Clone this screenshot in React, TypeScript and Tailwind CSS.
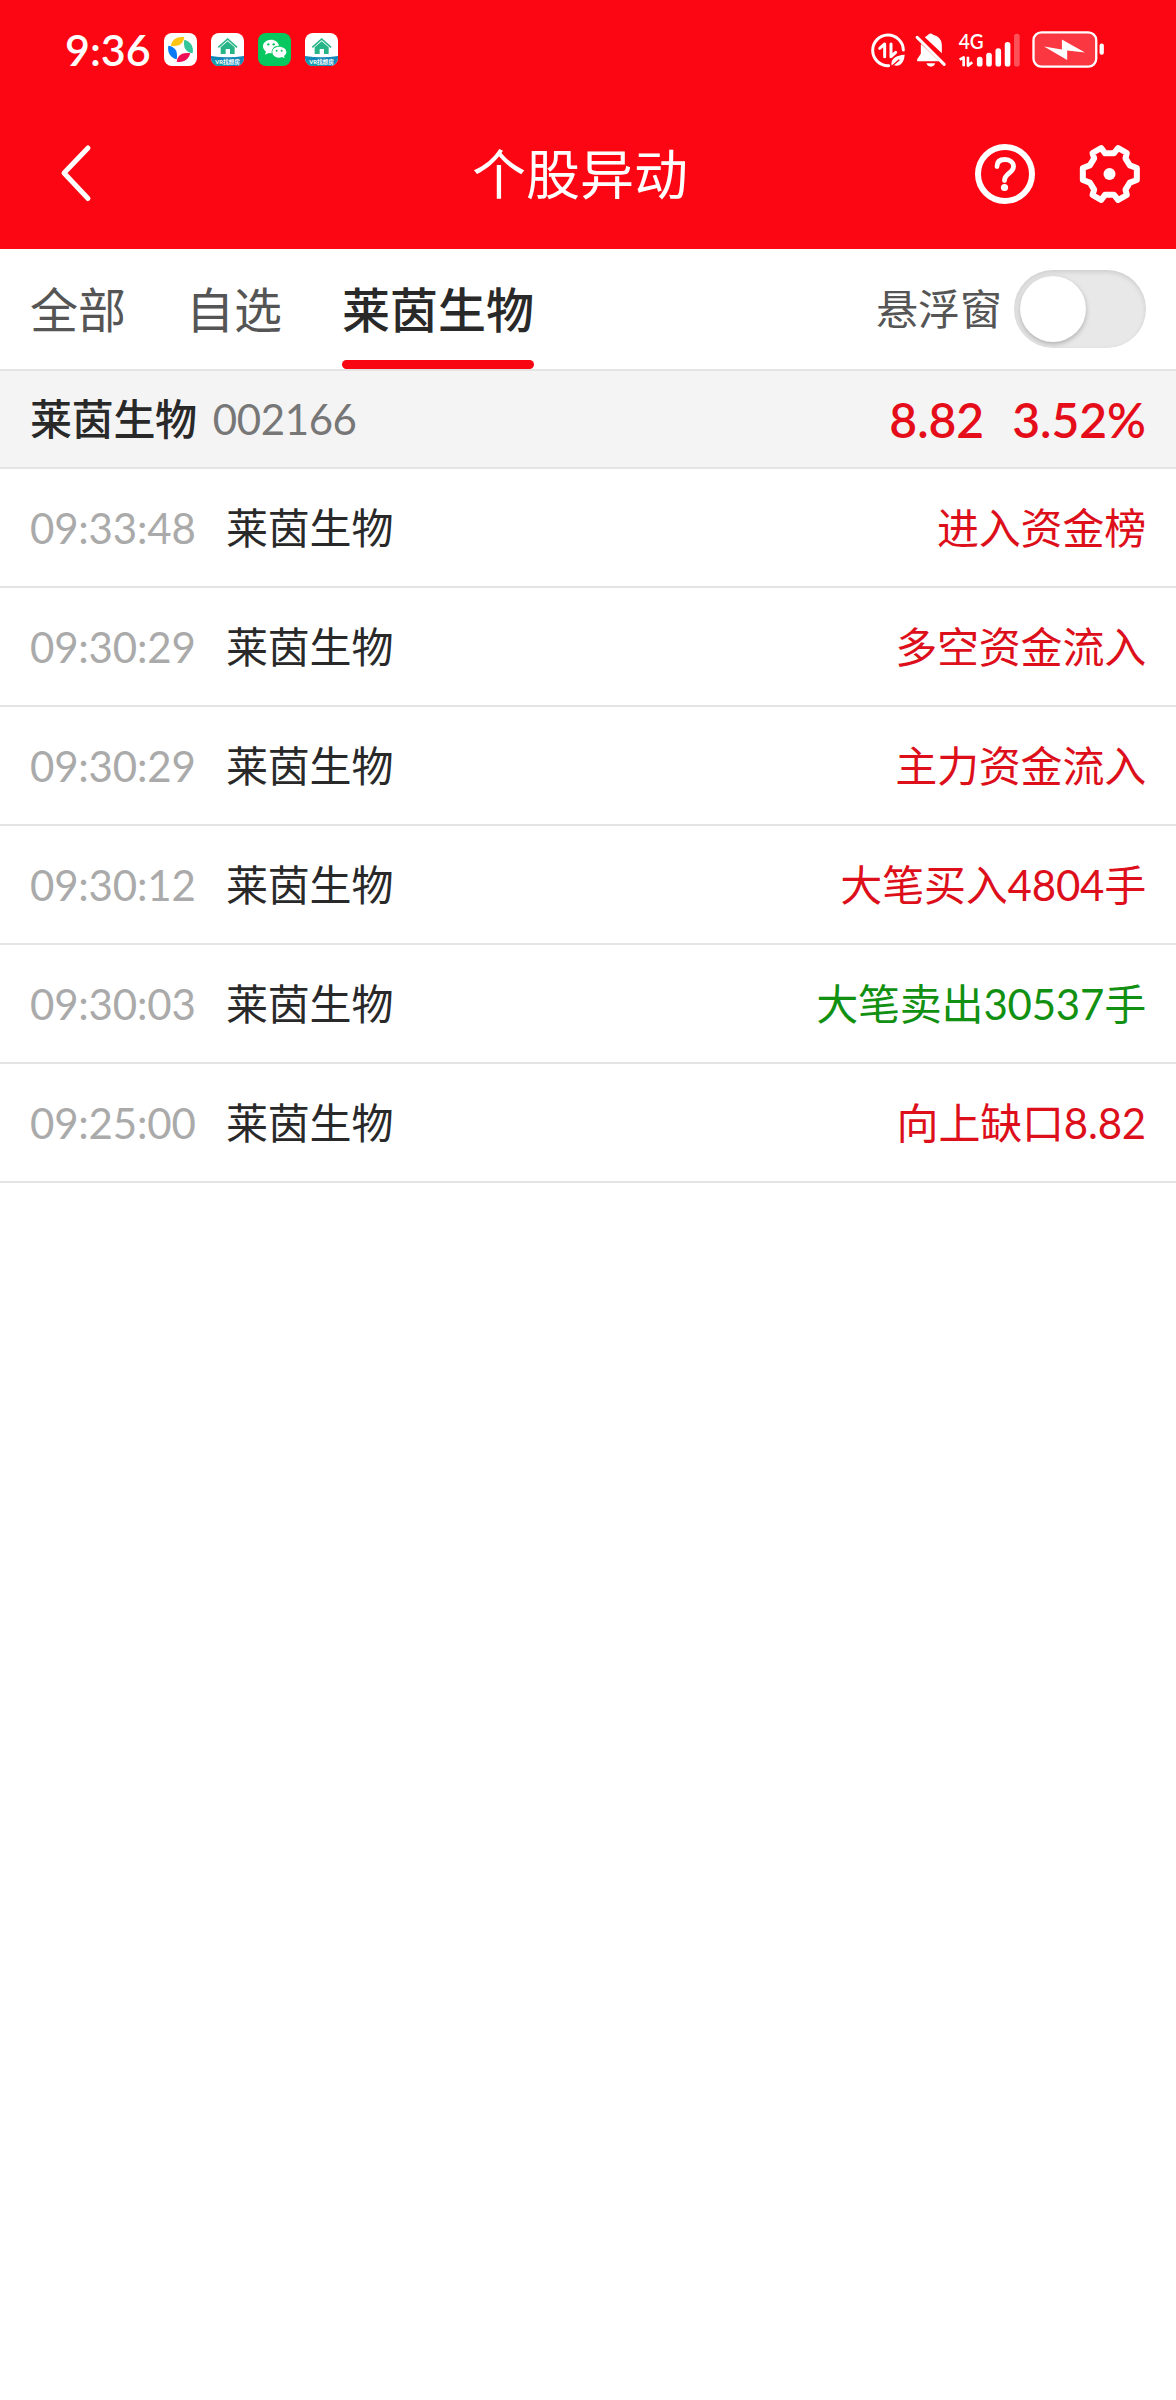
import type { ReactNode } from "react";

interface Alert {
  time: string;
  name: string;
  text: string;
  down?: boolean;
}

const alerts: Alert[] = [
  { time: "09:33:48", name: "莱茵生物", text: "进入资金榜" },
  { time: "09:30:29", name: "莱茵生物", text: "多空资金流入" },
  { time: "09:30:29", name: "莱茵生物", text: "主力资金流入" },
  { time: "09:30:12", name: "莱茵生物", text: "大笔买入4804手" },
  { time: "09:30:03", name: "莱茵生物", text: "大笔卖出30537手", down: true },
  { time: "09:25:00", name: "莱茵生物", text: "向上缺口8.82" },
];

function AppIcon({ bg, children }: { bg: string; children: ReactNode }) {
  return (
    <svg viewBox="0 0 99 99" className="h-[33px] w-[33px] rounded-[8px]">
      <rect width="99" height="99" fill={bg} />
      {children}
    </svg>
  );
}

function PinwheelIcon() {
  return (
    <AppIcon bg="#fff">
      <path d="M20 38C25 20 40 9 61 13C60 24 54 32 45 37C37 39 28 40 20 38Z" fill="#fdc414" />
      <path d="M61 20C79 25 90 40 86 61C75 60 67 54 62 45C60 37 59 28 61 20Z" fill="#35c79a" />
      <path d="M79 61C74 79 59 90 38 86C39 75 45 67 54 62C62 60 71 59 79 61Z" fill="#ef0f55" />
      <path d="M38 79C20 74 9 59 13 38C24 39 32 45 37 54C39 62 40 71 38 79Z" fill="#0a79f6" />
    </AppIcon>
  );
}

function HouseIcon() {
  return (
    <AppIcon bg="#fff">
      <path d="M22 43L50 18L78 43" fill="none" stroke="#27b587" strokeWidth="5" />
      <path d="M29 43L50 25L71 43V63H57V48H44V63H29Z" fill="#27b587" />
      <path d="M0 69Q50 77 99 69V99H0Z" fill="#1488b8" />
      <path d="M0 84Q30 75 60 99H0Z" fill="#1b9dab" />
      <text
        x="50"
        y="93"
        textAnchor="middle"
        fontSize="18"
        fontWeight="700"
        fill="#fff"
        textLength="74"
        lengthAdjust="spacingAndGlyphs"
      >
        VR找想房
      </text>
    </AppIcon>
  );
}

function WechatIcon() {
  return (
    <AppIcon bg="#07c75f">
      <path d="M39 20C25 20 15 29 15 40C15 47 19 52 24 56L21 65L32 60C35 61 38 61 41 61C40 46 50 37 63 38C61 27 51 20 39 20Z" fill="#fff" />
      <path d="M63 41C51 41 43 48 43 57C43 67 52 74 63 74C66 74 69 73 72 72L80 76L78 69C82 66 85 62 85 57C85 48 76 41 63 41Z" fill="#fff" />
      <circle cx="31" cy="34" r="3.5" fill="#07c75f" />
      <circle cx="47" cy="34" r="3.5" fill="#07c75f" />
      <circle cx="56" cy="53" r="3" fill="#07c75f" />
      <circle cx="71" cy="53" r="3" fill="#07c75f" />
    </AppIcon>
  );
}

function StatusBar() {
  return (
    <div className="flex h-[99px] items-center justify-between pr-[71px] pl-[65px]">
      <div className="flex items-center gap-[14px]">
        <span className="w-[85px] text-[43px] leading-none font-semibold">9:36</span>
        <PinwheelIcon />
        <HouseIcon />
        <WechatIcon />
        <HouseIcon />
      </div>
      <div className="flex items-center">
        {/* Data saver */}
        <svg viewBox="0 0 108 108" className="mr-[9px] h-[36px] w-[36px]" fill="none" stroke="#fff">
          <path d="M100 54A46 46 0 1 0 56 101" strokeWidth="9" strokeLinecap="round" />
          <path d="M29 49L44 36V74" strokeWidth="9" strokeLinejoin="round" strokeLinecap="round" />
          <path d="M63 36V74L77 61" strokeWidth="9" strokeLinejoin="round" strokeLinecap="round" />
          <path d="M65 101C60 80 80 69 104 68C103 90 90 106 72 100Z" fill="#fff" stroke="none" />
          <path d="M63 105L88 83" stroke="#fb0612" strokeWidth="4" />
        </svg>
        {/* Muted bell */}
        <svg viewBox="0 0 92 108" className="mr-[12px] h-[36px] w-[31px]">
          <path d="M17 38V65L6 82V88H72L18 36Z" fill="#fff" />
          <path d="M29 16Q35 11 39 8Q46 1 54 8Q80 15 80 38V64Z" fill="#fff" />
          <path d="M34 94H60Q57 104 47 104Q37 104 34 94Z" fill="#fff" />
          <path d="M6 16L87 97" stroke="#fff" strokeWidth="9" strokeLinecap="round" />
        </svg>
        {/* Mobile signal */}
        <svg viewBox="0 0 190 108" className="mr-[11px] h-[36px] w-[63px] overflow-visible">
          <text x="2" y="52" fontSize="64" fontWeight="600" fill="#fff" textLength="75" lengthAdjust="spacingAndGlyphs">
            4G
          </text>
          <path d="M5 83L17 76V103M30 74V101L43 91" fill="none" stroke="#fff" strokeWidth="8" strokeLinejoin="round" />
          <rect x="57" y="74" width="17" height="30" rx="8" fill="#fff" />
          <rect x="85" y="62" width="17" height="42" rx="8" fill="#fff" />
          <rect x="113" y="49" width="17" height="55" rx="8" fill="#fff" />
          <rect x="141" y="30" width="17" height="74" rx="8" fill="#fff" />
          <rect x="169" y="5" width="17" height="99" rx="8" fill="#fff" fillOpacity="0.3" />
        </svg>
        {/* Charging battery */}
        <svg viewBox="0 0 220 112" className="h-[37px] w-[73px]">
          <rect x="4" y="4" width="190" height="104" rx="24" fill="#fff" fillOpacity="0.2" stroke="#fff" strokeWidth="7" />
          <path d="M36 47L90 56V26L160 65L106 59V88Z" fill="#fff" />
          <rect x="204" y="38" width="13" height="34" rx="6" fill="#fff" />
        </svg>
      </div>
    </div>
  );
}

function Header() {
  return (
    <div className="grid h-[150px] grid-cols-[472px_1fr_201px] items-center">
      <svg viewBox="0 0 100 90" className="ml-[39px] h-[90px] w-[100px]" fill="none" stroke="#fff">
        <path d="M49 19L25 44L49 69.500" strokeWidth="5" strokeLinecap="round" strokeLinejoin="round" />
      </svg>
      <h1 className="pt-[2px] text-[54px] leading-[54px]">个股异动</h1>
      <div className="flex items-center">
        {/* Help */}
        <svg viewBox="0 0 60 60" className="mr-[43px] h-[60px] w-[60px]" fill="none" stroke="#fff">
          <circle cx="30" cy="30" r="27" strokeWidth="6" />
          <path d="M22 22.500C22 17.500 25 15.500 30 15.500C35 15.500 38.500 18.500 38.500 22.500C38.500 29 29.500 29.500 29.500 36.500" strokeWidth="4.800" strokeLinecap="round" />
          <circle cx="29.500" cy="43.500" r="3.600" fill="#fff" stroke="none" />
        </svg>
        {/* Settings */}
        <svg viewBox="386 42 188 180" className="h-[60px] w-[63px]" fill="none" stroke="#fff">
          <path
            d="M400 114L421 106L434 85L429 69L455 54L467 70H493L506 54L532 69L528 85L541 106L562 114V150L541 158L528 179L532 195L506 210L493 194H467L455 210L429 195L434 179L421 158L400 150Z"
            strokeWidth="18"
            strokeLinejoin="round"
          />
          <circle cx="480" cy="132" r="18" fill="#fff" stroke="none" />
        </svg>
      </div>
    </div>
  );
}

function Tabs() {
  return (
    <div className="flex h-[122px] justify-between border-b-2 border-[#e4e4e4] px-[30px]">
      <div className="flex gap-[60px] text-[48px] leading-[121px] text-[#555]">
        <span>全部</span>
        <span>自选</span>
        <span className="relative h-[120px] font-medium text-[#292929]">
          莱茵生物
          <span className="absolute bottom-0 left-0 h-[9px] w-full rounded-full bg-[#f90613]" />
        </span>
      </div>
      <div className="flex items-center gap-[12px]">
        <span className="text-[42px] text-[#555]">悬浮窗</span>
        <div className="h-[78px] w-[132px] rounded-full bg-[#e8e8e8] p-[6px] shadow-[inset_0_2px_5px_rgba(0,0,0,0.12)]">
          <div className="h-[66px] w-[66px] rounded-full bg-white shadow-[0_2px_5px_rgba(0,0,0,0.25)]" />
        </div>
      </div>
    </div>
  );
}

function AlertRow({ time, name, text, down }: Alert) {
  return (
    <div className="flex h-[119px] items-center border-b-2 border-[#e4e4e4] px-[30px] pt-[2px] text-[42px]">
      <span className="w-[196px] tracking-[-0.2px] text-[#aaa]">{time}</span>
      <span className="tracking-[-0.2px] text-[#292929]">{name}</span>
      <span className={down ? "ml-auto tracking-[-0.2px] text-[#119011]" : "ml-auto tracking-[-0.2px] text-[#dc0f1b]"}>
        {text}
      </span>
    </div>
  );
}

export default function App() {
  return (
    <div className="min-h-[2400px] w-[1176px] bg-white font-['Lato','Noto_Sans_CJK_SC',sans-serif]">
      <header className="bg-[#fb0612] text-white">
        <StatusBar />
        <Header />
      </header>
      <Tabs />
      <div className="flex h-[98px] items-center border-b-2 border-[#e4e4e4] bg-[#f4f4f4] px-[30px]">
        <span className="text-[42px] font-medium tracking-[-0.3px] text-[#292929]">莱茵生物</span>
        <span className="ml-[16px] text-[42px] tracking-[-0.4px] text-[#777]">002166</span>
        <div className="ml-auto flex gap-[28px] pt-px text-[48px] font-semibold text-[#e40d19]">
          <span>8.82</span>
          <span>3.52%</span>
        </div>
      </div>
      {alerts.map((alert, index) => (
        <AlertRow key={index} {...alert} />
      ))}
    </div>
  );
}
